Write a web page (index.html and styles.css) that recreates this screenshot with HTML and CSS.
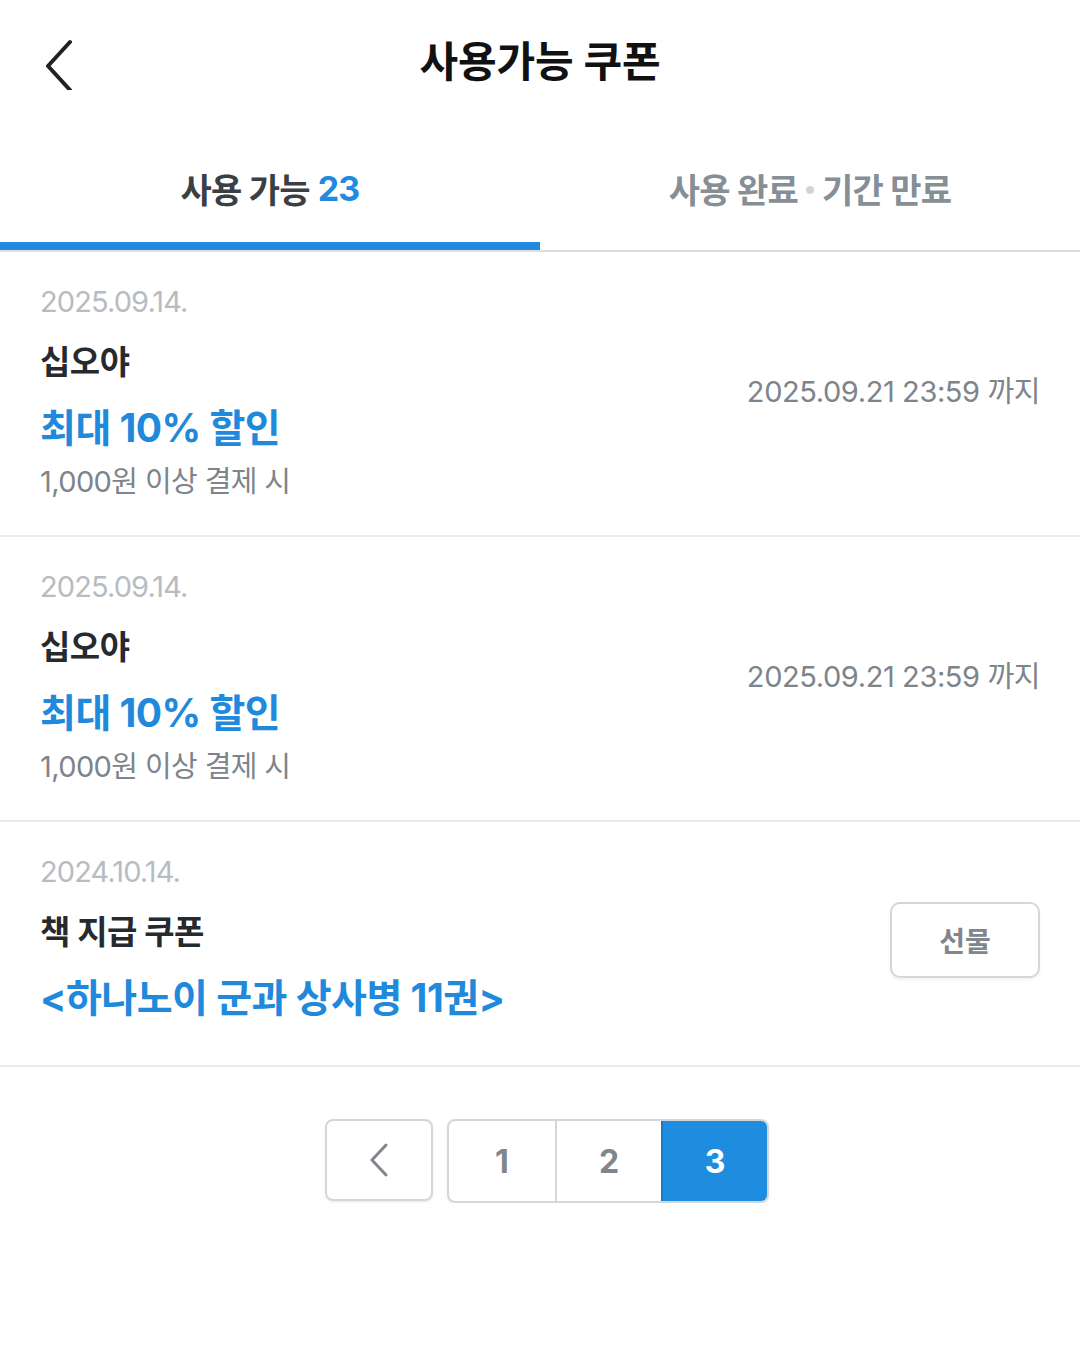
FILE: index.html
```html
<!DOCTYPE html>
<html lang="ko">
<head>
  <meta charset="UTF-8">
  <meta name="viewport" content="width=device-width, initial-scale=1.0">
  <title>사용가능 쿠폰</title>
  <link rel="stylesheet" href="styles.css">
</head>
<body>

<header class="top-bar">
  <button class="back-btn" aria-label="뒤로">
    <svg width="32" height="52" viewBox="0 0 32 52">
      <path d="M28 4 L6 28 L28 52" fill="none" stroke="#222" stroke-width="4" stroke-linecap="round" stroke-linejoin="round"/>
    </svg>
  </button>
  <h1>사용가능 쿠폰</h1>
</header>

<nav class="tabs">
  <div class="tab active">사용 가능 <span class="count">23</span></div>
  <div class="tab">사용 완료<span class="dot"></span>기간 만료</div>
</nav>

<ul class="coupon-list">
  <li class="coupon">
    <div class="coupon-info">
      <div class="coupon-date">2025.09.14.</div>
      <div class="coupon-name">십오야</div>
      <div class="coupon-benefit">최대 10% 할인</div>
      <div class="coupon-cond">1,000원 이상 결제 시</div>
    </div>
    <div class="coupon-expire">2025.09.21 23:59 까지</div>
  </li>
  <li class="coupon">
    <div class="coupon-info">
      <div class="coupon-date">2025.09.14.</div>
      <div class="coupon-name">십오야</div>
      <div class="coupon-benefit">최대 10% 할인</div>
      <div class="coupon-cond">1,000원 이상 결제 시</div>
    </div>
    <div class="coupon-expire">2025.09.21 23:59 까지</div>
  </li>
  <li class="coupon coupon-book">
    <div class="coupon-info">
      <div class="coupon-date">2024.10.14.</div>
      <div class="coupon-name">책 지급 쿠폰</div>
      <div class="coupon-benefit">&lt;하나노이 군과 상사병 11권&gt;</div>
    </div>
    <button class="gift-btn">선물</button>
  </li>
</ul>

<div class="pagination">
  <button class="page-btn prev" aria-label="이전">
    <svg width="20" height="34" viewBox="0 0 20 34">
      <path d="M17 2 L3 17 L17 32" fill="none" stroke="#80868c" stroke-width="3" stroke-linecap="round" stroke-linejoin="round"/>
    </svg>
  </button>
  <div class="page-group">
    <button class="page-btn">1</button>
    <button class="page-btn">2</button>
    <button class="page-btn current">3</button>
  </div>
</div>

</body>
</html>
```

FILE: styles.css
```css
body {
  margin: 0;
  background: #fff;
  font-family: "Inter", "Noto Sans CJK KR", sans-serif;
  color: #26292d;
}
button {
  font-family: inherit;
  background: none;
  border: none;
  padding: 0;
  cursor: pointer;
}

/* header */
.top-bar {
  height: 120px;
  display: flex;
  align-items: center;
  justify-content: center;
  position: relative;
}
.top-bar h1 {
  margin: 0 0 4px;
  font-size: 42px;
  font-weight: 700;
  letter-spacing: -0.1px;
  color: #111;
}
.back-btn {
  position: absolute;
  left: 42px;
  top: 38px;
  display: flex;
}

/* tabs */
.tabs {
  display: flex;
  border-bottom: 2px solid #dcdfe2;
}
.tab {
  flex: 1;
  height: 130px;
  display: flex;
  align-items: center;
  justify-content: center;
  font-size: 34px;
  font-weight: 700;
  letter-spacing: -0.8px;
  color: #868e96;
  padding: 14px 0 8px;
  box-sizing: border-box;
}
.tab.active {
  color: #3a3f45;
  border-bottom: 8px solid #218ae0;
  padding-bottom: 0;
}
.tab .count {
  color: #218ae0;
  margin-left: 8px;
}
.tab .dot {
  width: 8px;
  height: 8px;
  border-radius: 50%;
  background: #d0d4d8;
  margin: 4px 8px 0;
}

/* coupons */
.coupon-list {
  list-style: none;
  margin: 0;
  padding: 0;
}
.coupon {
  display: flex;
  align-items: center;
  justify-content: space-between;
  padding: 32px 40px 35px;
  border-bottom: 2px solid #e9eaec;
}
.coupon-book {
  padding-bottom: 45px;
}
.coupon-date {
  font-size: 29px;
  line-height: 36px;
  color: #b7bcc2;
  letter-spacing: -0.9px;
}
.coupon-name {
  margin-top: 20px;
  font-size: 33px;
  line-height: 44px;
  font-weight: 700;
  color: #26292d;
  letter-spacing: -0.5px;
}
.coupon-benefit {
  margin-top: 22px;
  font-size: 39px;
  line-height: 44px;
  font-weight: 700;
  color: #2189dc;
  letter-spacing: -0.5px;
}
.coupon-cond {
  margin-top: 14px;
  font-size: 29px;
  line-height: 36px;
  color: #7d848b;
  letter-spacing: -0.6px;
}
.coupon-expire {
  font-size: 29px;
  color: #7d848b;
  letter-spacing: -0.4px;
  margin-bottom: 6px;
}
.gift-btn {
  width: 150px;
  height: 76px;
  border: 2px solid #d3d6da;
  border-radius: 10px;
  font-size: 28px;
  font-weight: 700;
  color: #80868c;
  box-shadow: 0 2px 3px rgba(0, 0, 0, 0.06);
  margin-top: 6px;
}

/* pagination */
.pagination {
  display: flex;
  justify-content: center;
  gap: 14px;
  margin-top: 52px;
  padding-left: 14px;
}
.page-group {
  display: flex;
  border: 2px solid #d3d6da;
  border-radius: 8px;
  overflow: hidden;
  box-shadow: 0 2px 3px rgba(0, 0, 0, 0.06);
}
.page-btn {
  width: 106px;
  height: 80px;
  display: flex;
  align-items: center;
  justify-content: center;
  font-size: 32px;
  font-weight: 700;
  color: #80868c;
}
.page-group .page-btn + .page-btn {
  border-left: 2px solid #d3d6da;
}
.page-btn.prev {
  width: 108px;
  height: 82px;
  border: 2px solid #d3d6da;
  border-radius: 8px;
  box-shadow: 0 2px 3px rgba(0, 0, 0, 0.06);
}
.page-btn.current {
  background: #1f8ddf;
  color: #fff;
}
.page-group .page-btn.current {
  border-left-color: #1a7cc6;
}
```
